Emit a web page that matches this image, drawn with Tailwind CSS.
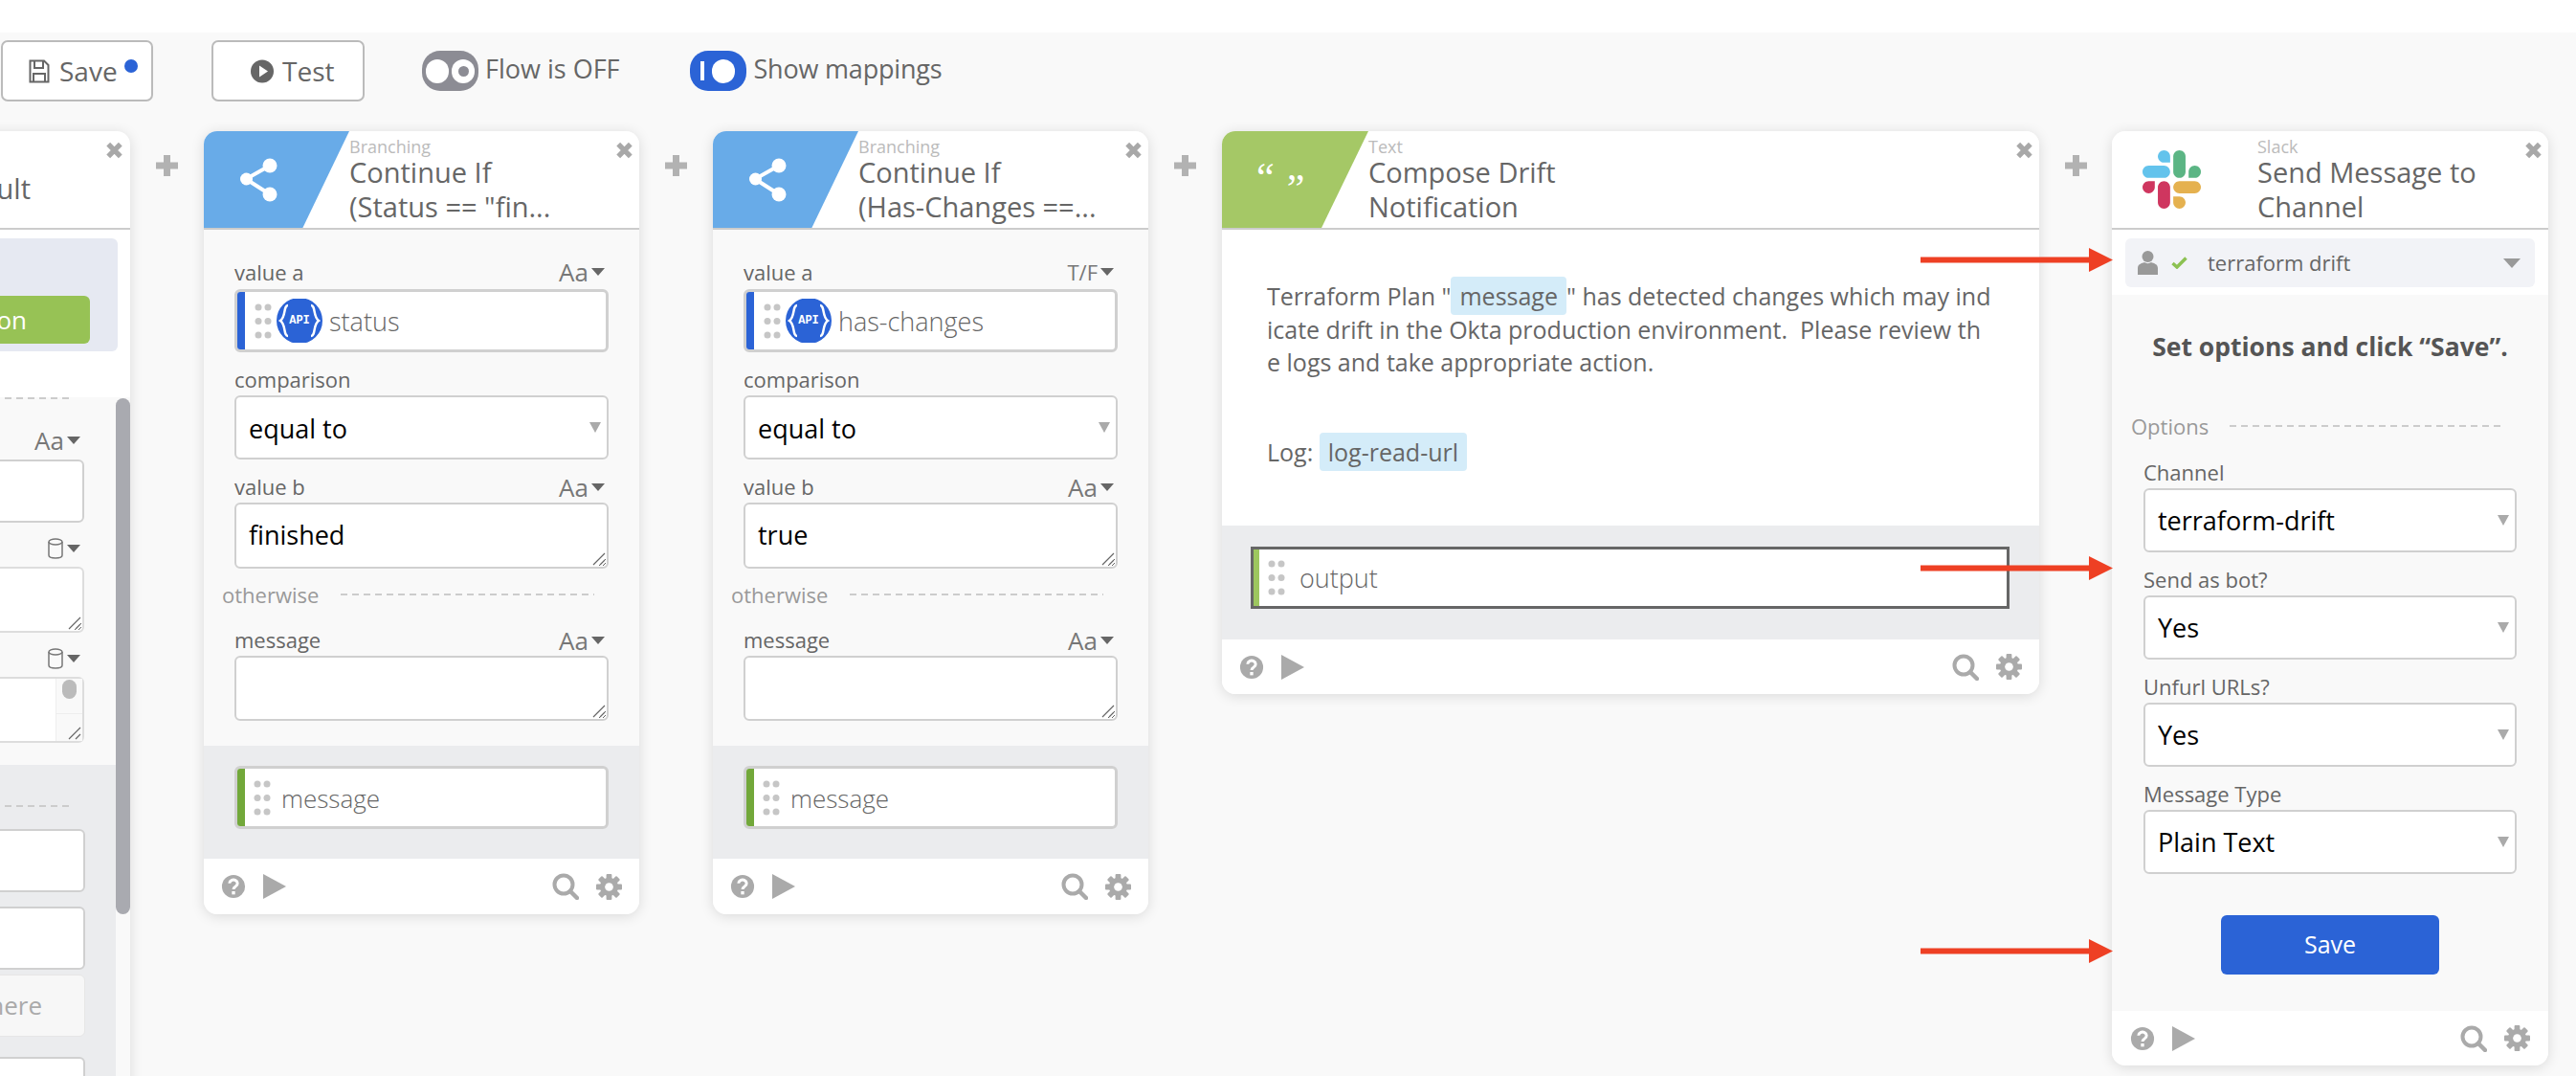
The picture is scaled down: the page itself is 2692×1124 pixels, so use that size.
<!DOCTYPE html>
<html lang="en">
<head>
    <meta charset="UTF-8">
    <title>Flow editor</title>
    <script src="https://cdn.jsdelivr.net/npm/@tailwindcss/browser@4"></script>
</head>
<body class="relative h-[1124px] overflow-hidden bg-[#f9f9f9] font-['Open_Sans',sans-serif] text-[#666]">
    <!-- shared icons -->
    <svg class="hidden">
        <symbol id="i-help" viewBox="0 0 28 28"><circle cx="14" cy="14" r="13" fill="#aaa"/><path d="M9.5 10.5a4.5 4 0 1 1 6.8 3.5c-1.6 1-2.3 1.5-2.3 3.2" fill="none" stroke="#fff" stroke-width="3.2"/><rect x="12.2" y="19.4" width="3.6" height="3.6" fill="#fff"/></symbol>
        <symbol id="i-play" viewBox="0 0 24 26"><path d="M0 0 24 13 0 26z" fill="#aaa"/></symbol>
        <symbol id="i-search" viewBox="0 0 28 28"><circle cx="12" cy="12" r="9.5" fill="none" stroke="#aaa" stroke-width="4"/><path d="M19 19 26 26" stroke="#aaa" stroke-width="4.5" stroke-linecap="round"/></symbol>
        <symbol id="i-gear" viewBox="0 0 28 28"><g fill="#aaa"><rect x="11" y="0" width="6" height="28" rx="1"/><rect x="11" y="0" width="6" height="28" rx="1" transform="rotate(45 14 14)"/><rect x="11" y="0" width="6" height="28" rx="1" transform="rotate(90 14 14)"/><rect x="11" y="0" width="6" height="28" rx="1" transform="rotate(135 14 14)"/><circle cx="14" cy="14" r="10"/></g><circle cx="14" cy="14" r="4.5" fill="#fff"/></symbol>
        <symbol id="i-x" viewBox="0 0 20 20"><path d="M3 3 17 17M17 3 3 17" stroke="#a8a8a8" stroke-width="6"/></symbol>
        <symbol id="i-plus" viewBox="0 0 23 22"><path d="M8 0h7v7.500h8v7h-8v7.500h-7v-7.500h-8v-7h8z" fill="#b2b2b2"/></symbol>
        <symbol id="i-share" viewBox="0 0 40 46"><path d="M31 8 6 22 31 38" fill="none" stroke="#fff" stroke-width="4"/><circle cx="31" cy="8" r="7.500" fill="#fff"/><circle cx="6.500" cy="22" r="6.500" fill="#fff"/><circle cx="31" cy="38" r="7.500" fill="#fff"/></symbol>
        <symbol id="i-api" viewBox="0 0 48 46"><circle cx="24" cy="23" r="24" fill="#2b63d6"/><path d="M12 7C7 7 10 19 4 23 10 27 7 39 12 39M36 7C41 7 38 19 44 23 38 27 41 39 36 39" fill="none" stroke="#fff" stroke-width="2.500"/></symbol>
        <symbol id="i-dots" viewBox="0 0 18 37"><g fill="#c6c6c6"><circle cx="4" cy="4" r="3.500"/><circle cx="14" cy="4" r="3.500"/><circle cx="4" cy="18.500" r="3.500"/><circle cx="14" cy="18.500" r="3.500"/><circle cx="4" cy="33" r="3.500"/><circle cx="14" cy="33" r="3.500"/></g></symbol>
        <symbol id="i-db" viewBox="0 0 16 22"><ellipse cx="8" cy="4" rx="7" ry="3" fill="none" stroke="#777" stroke-width="1.500"/><path d="M1 4v14c0 4 14 4 14 0V4" fill="none" stroke="#777" stroke-width="1.500"/></symbol>
        <symbol id="i-arrow" viewBox="0 0 201 25"><path d="M0 9.500H176V0L201 12.500 176 25V15.500H0z" fill="#ee4024"/></symbol>
        <symbol id="i-grip" viewBox="0 0 14 14"><path d="M1 13 13 1M8 13 13 8" stroke="#666" stroke-width="1.200"/></symbol>
    </svg>

    <div class="h-[34px] bg-white"></div>

    <!-- toolbar -->
    <div class="flex items-center pl-[1px] mt-[8px] h-[64px] text-[27px]">
        <button class="relative flex items-center h-[64px] w-[159px] pl-[27px] gap-[10px] bg-white border-2 border-[#bbb] rounded-[7px] text-[28px]">
            <svg class="w-[22px] h-[25px]" viewBox="0 0 22 25"><path d="M1.500 1.500H16L20.500 6V23.500H1.500z" fill="none" stroke="#666" stroke-width="2"/><path d="M6 2V9H15V2M5 23V15H17V23" fill="none" stroke="#666" stroke-width="2"/></svg>
            <span>Save</span>
            <span class="absolute left-[127px] top-[18px] w-[14px] h-[14px] rounded-full bg-[#2b63d6]"></span>
        </button>
        <button class="flex items-center h-[64px] w-[160px] ml-[61px] pl-[39px] gap-[9px] bg-white border-2 border-[#bbb] rounded-[7px] text-[28px]">
            <svg class="w-[24px] h-[25px]" viewBox="0 0 24 25"><circle cx="12" cy="12.500" r="12" fill="#666"/><path d="M9 6.500 18 12.500 9 18.500z" fill="#fff"/></svg>
            <span>Test</span>
        </button>
        <div class="flex items-center justify-center gap-[3px] ml-[60px] w-[59px] h-[42px] rounded-[19px] bg-[#8c8c94]">
            <span class="w-[24px] h-[25px] rounded-full bg-white"></span>
            <span class="flex items-center justify-center w-[24px] h-[25px] rounded-full bg-white"><span class="w-[11px] h-[11px] rounded-full bg-[#8c8c94]"></span></span>
        </div>
        <span class="ml-[7px] mb-[4px]">Flow is OFF</span>
        <div class="flex items-center justify-center gap-[8px] ml-[73px] w-[59px] h-[42px] rounded-[19px] bg-[#2b63d6]">
            <span class="w-[4px] h-[20px] bg-white"></span>
            <span class="w-[24px] h-[25px] rounded-full bg-white"></span>
        </div>
        <span class="ml-[8px] mb-[4px] tracking-[-0.2px]">Show mappings</span>
    </div>

    <!-- flow canvas -->
    <div class="flex items-start mt-[31px] ml-[-319px] w-[3100px]">

        <!-- card 1, runs off the left edge and the bottom -->
        <section class="relative w-[455px] h-[1000px] shrink-0 bg-white rounded-t-[14px] shadow-[0_2px_14px_rgba(0,0,0,0.13)]">
            <svg class="absolute right-[7px] top-[11px] w-[19px] h-[18px]"><use href="#i-x"/></svg>
            <div class="h-[103px] border-b-2 border-[#ccc] flex items-center justify-end pr-[104px] pt-[18px] text-[29px]">Get Result</div>
            <div class="h-[133px] pt-[9px] pr-[13px]">
                <div class="h-[118px] bg-[#e6e9f2] rounded-[6px] pt-[60px] pr-[29px]">
                    <div class="h-[50px] bg-[#97c255] rounded-[6px] flex items-center justify-end pr-[66px] text-white text-[26px]">Connection</div>
                </div>
            </div>
            <div class="relative h-[764px] bg-[#f9f9f9]">
                <div class="absolute right-0 top-[1px] w-[15px] h-[539px] rounded-full bg-[#a9aab0]"></div>
                <div class="pr-[48px]">
                    <div class="h-[2px] mt-[42px] mr-[15px] bg-[repeating-linear-gradient(90deg,#ccc_0_7px,transparent_7px_12px)]"></div>
                    <div class="flex justify-end items-center gap-[3px] h-[34px] mt-[26px] mb-[3px] text-[26px] text-[#777] pr-[4px]">Aa<span class="w-0 h-0 border-x-[7px] border-x-transparent border-t-[8px] border-t-[#666]"></span></div>
                    <div class="h-[66px] bg-white border-2 border-[#d0d0d0] rounded-[6px]"></div>
                    <div class="flex justify-end items-center gap-[4px] h-[32px] mt-[11px] mb-[3px] pr-[4px]"><svg class="w-[16px] h-[22px]"><use href="#i-db"/></svg><span class="w-0 h-0 border-x-[7px] border-x-transparent border-t-[8px] border-t-[#666]"></span></div>
                    <div class="relative h-[69px]">
                        <textarea class="block w-full h-[69px] bg-white border-2 border-[#ddd] rounded-[6px]"></textarea>
                        <svg class="absolute right-[3px] bottom-[3px] w-[14px] h-[14px]"><use href="#i-grip"/></svg>
                    </div>
                    <div class="flex justify-end items-center gap-[4px] h-[32px] mt-[11px] mb-[3px] pr-[4px]"><svg class="w-[16px] h-[22px]"><use href="#i-db"/></svg><span class="w-0 h-0 border-x-[7px] border-x-transparent border-t-[8px] border-t-[#666]"></span></div>
                    <div class="relative h-[69px]">
                        <textarea class="block w-full h-[69px] bg-white border-2 border-[#ddd] rounded-[6px]"></textarea>
                        <div class="absolute right-[2px] top-[2px] bottom-[2px] w-[28px] bg-[#f9f9f9] border-l border-[#eee]">
                            <div class="mx-auto mt-[1px] w-[15px] h-[20px] rounded-full bg-[#bbb]"></div>
                            <div class="mt-[15px] border-t border-[#eee]"></div>
                        </div>
                        <svg class="absolute right-[3px] bottom-[3px] w-[14px] h-[14px]"><use href="#i-grip"/></svg>
                    </div>
                </div>
                <div class="mt-[23px] mr-[15px] h-[340px] bg-[#ebecee] pr-[32px]">
                    <div class="h-[2px] translate-y-[42px] mr-[16px] bg-[repeating-linear-gradient(90deg,#ccc_0_7px,transparent_7px_12px)]"></div>
                    <div class="pt-[65px]">
                        <div class="h-[66px] bg-white border-2 border-[#d0d0d0] rounded-[6px]"></div>
                        <div class="h-[66px] mt-[15px] bg-white border-2 border-[#d0d0d0] rounded-[6px]"></div>
                        <div class="h-[65px] mt-[5px] flex items-center justify-end pr-[44px] bg-[#f7f7f7] rounded-[6px] border border-[#e6e6e6] text-[26px] text-[#aaa]">Drop here</div>
                        <div class="h-[66px] mt-[21px] bg-white border-2 border-[#d0d0d0] rounded-[6px]"></div>
                    </div>
                </div>
            </div>
        </section>

        <div class="w-[77px] shrink-0 flex justify-center pt-[25px]"><svg class="w-[23px] h-[22px]"><use href="#i-plus"/></svg></div>

        <!-- continue if: status -->
        <section class="relative w-[455px] shrink-0 bg-[#f9f9f9] rounded-[14px] shadow-[0_2px_14px_rgba(0,0,0,0.13)]">
            <svg class="absolute right-[6px] top-[11px] w-[19px] h-[18px]"><use href="#i-x"/></svg>
            <header class="flex h-[103px] bg-white rounded-t-[14px] border-b-2 border-[#ccc] overflow-hidden">
                <div class="w-[152px] shrink-0 flex items-center pl-[38px] bg-[#68abe8] [clip-path:polygon(0_0,100%_0,68%_100%,0_100%)]"><svg class="w-[40px] h-[46px]"><use href="#i-share"/></svg></div>
                <div class="pt-[7px]">
                    <div class="text-[18px] leading-[18px] text-[#bbb]">Branching</div>
                    <div class="text-[29px] leading-[36px]">Continue If<br>(Status == "fin...</div>
                </div>
            </header>
            <div class="h-[539px] px-[32px] pt-[29px]">
                <div class="flex justify-between items-center h-[33px] pb-[3px] text-[22px]"><span>value a</span><span class="flex items-center gap-[3px] pr-[4px] text-[26px] leading-[28px] text-[#777]">Aa<span class="w-0 h-0 border-x-[7px] border-x-transparent border-t-[8px] border-t-[#666]"></span></span></div>
                <div class="relative flex items-center h-[66px] bg-white border-[3px] border-[#d0d0d0] rounded-[6px] overflow-hidden">
                    <span class="w-[8px] h-full bg-[#2b63d6]"></span>
                    <svg class="ml-[10px] w-[18px] h-[37px]"><use href="#i-dots"/></svg>
                    <span class="relative ml-[5px] w-[48px] h-[46px]"><svg class="w-[48px] h-[46px]"><use href="#i-api"/></svg><span class="absolute inset-0 flex items-center justify-center font-['Liberation_Mono',monospace] font-bold text-[12px] text-white">API</span></span>
                    <span class="ml-[7px] pt-[2px] text-[27px] font-light">status</span>
                </div>
                <div class="h-[31px] mt-[14px] text-[22px] leading-[28px]">comparison</div>
                <div class="relative">
                    <select class="block w-full h-[67px] pl-[13px] pt-[3px] appearance-none bg-white border-2 border-[#d0d0d0] rounded-[6px] text-[27px] text-black"><option>equal to</option></select>
                    <span class="absolute right-[8px] top-[28px] w-0 h-0 border-x-[6px] border-x-transparent border-t-[11px] border-t-[#aaa]"></span>
                </div>
                <div class="flex justify-between items-center h-[31px] pb-[2px] mt-[14px] text-[22px]"><span>value b</span><span class="flex items-center gap-[3px] pr-[4px] text-[26px] leading-[28px] text-[#777]">Aa<span class="w-0 h-0 border-x-[7px] border-x-transparent border-t-[8px] border-t-[#666]"></span></span></div>
                <div class="relative h-[69px]">
                    <textarea class="block w-full h-[69px] pl-[13px] pt-[14px] bg-white border-2 border-[#d0d0d0] rounded-[6px] text-[27px] leading-[36px] text-black">finished</textarea>
                    <svg class="absolute right-[3px] bottom-[3px] w-[14px] h-[14px]"><use href="#i-grip"/></svg>
                </div>
                <div class="flex items-center h-[24px] mt-[15px] -ml-[13px] text-[22px] text-[#999]"><span class="w-[124px] shrink-0">otherwise</span><span class="w-[265px] h-[2px] bg-[repeating-linear-gradient(90deg,#ccc_0_7px,transparent_7px_12px)]"></span></div>
                <div class="flex justify-between items-center h-[31px] pb-[2px] mt-[21px] text-[22px]"><span>message</span><span class="flex items-center gap-[3px] pr-[4px] text-[26px] leading-[28px] text-[#777]">Aa<span class="w-0 h-0 border-x-[7px] border-x-transparent border-t-[8px] border-t-[#666]"></span></span></div>
                <div class="relative h-[68px]">
                    <textarea class="block w-full h-[68px] bg-white border-2 border-[#d0d0d0] rounded-[6px]"></textarea>
                    <svg class="absolute right-[3px] bottom-[3px] w-[14px] h-[14px]"><use href="#i-grip"/></svg>
                </div>
            </div>
            <div class="h-[118px] pt-[21px] px-[32px] bg-[#ebecee]">
                <div class="flex items-center h-[66px] bg-white border-[3px] border-[#d0d0d0] rounded-[6px] overflow-hidden">
                    <span class="w-[8px] h-full bg-[#72a83a]"></span>
                    <svg class="ml-[9px] w-[18px] h-[37px]"><use href="#i-dots"/></svg>
                    <span class="ml-[11px] pt-[2px] text-[26px] font-light">message</span>
                </div>
            </div>
            <footer class="flex items-center h-[58px] px-[18px] bg-white rounded-b-[14px]">
                <svg class="w-[26px] h-[26px]"><use href="#i-help"/></svg>
                <svg class="ml-[18px] w-[24px] h-[26px]"><use href="#i-play"/></svg>
                <svg class="ml-auto w-[28px] h-[28px]"><use href="#i-search"/></svg>
                <svg class="ml-[18px] w-[27px] h-[27px]"><use href="#i-gear"/></svg>
            </footer>
        </section>

        <div class="w-[77px] shrink-0 flex justify-center pt-[25px]"><svg class="w-[23px] h-[22px]"><use href="#i-plus"/></svg></div>

        <!-- continue if: has-changes -->
        <section class="relative w-[455px] shrink-0 bg-[#f9f9f9] rounded-[14px] shadow-[0_2px_14px_rgba(0,0,0,0.13)]">
            <svg class="absolute right-[6px] top-[11px] w-[19px] h-[18px]"><use href="#i-x"/></svg>
            <header class="flex h-[103px] bg-white rounded-t-[14px] border-b-2 border-[#ccc] overflow-hidden">
                <div class="w-[152px] shrink-0 flex items-center pl-[38px] bg-[#68abe8] [clip-path:polygon(0_0,100%_0,68%_100%,0_100%)]"><svg class="w-[40px] h-[46px]"><use href="#i-share"/></svg></div>
                <div class="pt-[7px]">
                    <div class="text-[18px] leading-[18px] text-[#bbb]">Branching</div>
                    <div class="text-[29px] leading-[36px] whitespace-nowrap">Continue If<br>(Has-Changes ==...</div>
                </div>
            </header>
            <div class="h-[539px] px-[32px] pt-[29px]">
                <div class="flex justify-between items-center h-[33px] pb-[3px] text-[22px]"><span>value a</span><span class="flex items-center gap-[3px] pr-[4px] text-[22px] leading-[28px] text-[#777]">T/F<span class="w-0 h-0 border-x-[7px] border-x-transparent border-t-[8px] border-t-[#666]"></span></span></div>
                <div class="relative flex items-center h-[66px] bg-white border-[3px] border-[#d0d0d0] rounded-[6px] overflow-hidden">
                    <span class="w-[8px] h-full bg-[#2b63d6]"></span>
                    <svg class="ml-[10px] w-[18px] h-[37px]"><use href="#i-dots"/></svg>
                    <span class="relative ml-[5px] w-[48px] h-[46px]"><svg class="w-[48px] h-[46px]"><use href="#i-api"/></svg><span class="absolute inset-0 flex items-center justify-center font-['Liberation_Mono',monospace] font-bold text-[12px] text-white">API</span></span>
                    <span class="ml-[7px] pt-[2px] text-[27px] font-light">has-changes</span>
                </div>
                <div class="h-[31px] mt-[14px] text-[22px] leading-[28px]">comparison</div>
                <div class="relative">
                    <select class="block w-full h-[67px] pl-[13px] pt-[3px] appearance-none bg-white border-2 border-[#d0d0d0] rounded-[6px] text-[27px] text-black"><option>equal to</option></select>
                    <span class="absolute right-[8px] top-[28px] w-0 h-0 border-x-[6px] border-x-transparent border-t-[11px] border-t-[#aaa]"></span>
                </div>
                <div class="flex justify-between items-center h-[31px] pb-[2px] mt-[14px] text-[22px]"><span>value b</span><span class="flex items-center gap-[3px] pr-[4px] text-[26px] leading-[28px] text-[#777]">Aa<span class="w-0 h-0 border-x-[7px] border-x-transparent border-t-[8px] border-t-[#666]"></span></span></div>
                <div class="relative h-[69px]">
                    <textarea class="block w-full h-[69px] pl-[13px] pt-[14px] bg-white border-2 border-[#d0d0d0] rounded-[6px] text-[27px] leading-[36px] text-black">true</textarea>
                    <svg class="absolute right-[3px] bottom-[3px] w-[14px] h-[14px]"><use href="#i-grip"/></svg>
                </div>
                <div class="flex items-center h-[24px] mt-[15px] -ml-[13px] text-[22px] text-[#999]"><span class="w-[124px] shrink-0">otherwise</span><span class="w-[265px] h-[2px] bg-[repeating-linear-gradient(90deg,#ccc_0_7px,transparent_7px_12px)]"></span></div>
                <div class="flex justify-between items-center h-[31px] pb-[2px] mt-[21px] text-[22px]"><span>message</span><span class="flex items-center gap-[3px] pr-[4px] text-[26px] leading-[28px] text-[#777]">Aa<span class="w-0 h-0 border-x-[7px] border-x-transparent border-t-[8px] border-t-[#666]"></span></span></div>
                <div class="relative h-[68px]">
                    <textarea class="block w-full h-[68px] bg-white border-2 border-[#d0d0d0] rounded-[6px]"></textarea>
                    <svg class="absolute right-[3px] bottom-[3px] w-[14px] h-[14px]"><use href="#i-grip"/></svg>
                </div>
            </div>
            <div class="h-[118px] pt-[21px] px-[32px] bg-[#ebecee]">
                <div class="flex items-center h-[66px] bg-white border-[3px] border-[#d0d0d0] rounded-[6px] overflow-hidden">
                    <span class="w-[8px] h-full bg-[#72a83a]"></span>
                    <svg class="ml-[9px] w-[18px] h-[37px]"><use href="#i-dots"/></svg>
                    <span class="ml-[11px] pt-[2px] text-[26px] font-light">message</span>
                </div>
            </div>
            <footer class="flex items-center h-[58px] px-[18px] bg-white rounded-b-[14px]">
                <svg class="w-[26px] h-[26px]"><use href="#i-help"/></svg>
                <svg class="ml-[18px] w-[24px] h-[26px]"><use href="#i-play"/></svg>
                <svg class="ml-auto w-[28px] h-[28px]"><use href="#i-search"/></svg>
                <svg class="ml-[18px] w-[27px] h-[27px]"><use href="#i-gear"/></svg>
            </footer>
        </section>

        <div class="w-[77px] shrink-0 flex justify-center pt-[25px]"><svg class="w-[23px] h-[22px]"><use href="#i-plus"/></svg></div>

        <!-- compose text -->
        <section class="relative w-[854px] shrink-0 bg-white rounded-[14px] shadow-[0_2px_14px_rgba(0,0,0,0.13)]">
            <svg class="absolute right-[6px] top-[11px] w-[19px] h-[18px]"><use href="#i-x"/></svg>
            <header class="flex h-[103px] bg-white rounded-t-[14px] border-b-2 border-[#ccc] overflow-hidden">
                <div class="w-[153px] shrink-0 flex items-center gap-[13px] pl-[36px] bg-[#a5c866] [clip-path:polygon(0_0,100%_0,68%_100%,0_100%)] font-['Liberation_Serif',serif] text-[42px] leading-none text-white"><span class="-translate-y-[3px]">“</span><span class="translate-y-[9px]">”</span></div>
                <div class="pt-[7px]">
                    <div class="text-[18px] leading-[18px] text-[#bbb]">Text</div>
                    <div class="text-[29px] leading-[36px]">Compose Drift<br>Notification</div>
                </div>
            </header>
            <div class="h-[309px] pl-[47px] pt-[52px] text-[25px] leading-[34.5px]">
                <div class="whitespace-pre">Terraform Plan "<span class="px-[9px] py-[3px] rounded-[4px] bg-[#d4ecf9]">message</span>" has detected changes which may ind</div>
                <div class="whitespace-pre">icate drift in the Okta production environment.  Please review th</div>
                <div class="whitespace-pre">e logs and take appropriate action.</div>
                <div class="whitespace-pre mt-[59px]">Log: <span class="px-[9px] py-[3px] rounded-[4px] bg-[#d4ecf9]">log-read-url</span></div>
            </div>
            <div class="h-[119px] pt-[22px] pl-[30px] bg-[#ebecee]">
                <div class="flex items-center w-[793px] h-[65px] bg-white border-[3px] border-[#666]">
                    <span class="w-[6px] h-full bg-[#9dc75f]"></span>
                    <svg class="ml-[9px] w-[18px] h-[37px]"><use href="#i-dots"/></svg>
                    <span class="ml-[15px] pt-[2px] text-[27px] font-light">output</span>
                </div>
            </div>
            <footer class="flex items-center h-[57px] px-[18px] bg-white rounded-b-[14px]">
                <svg class="w-[26px] h-[26px]"><use href="#i-help"/></svg>
                <svg class="ml-[18px] w-[24px] h-[26px]"><use href="#i-play"/></svg>
                <svg class="ml-auto w-[28px] h-[28px]"><use href="#i-search"/></svg>
                <svg class="ml-[18px] w-[27px] h-[27px]"><use href="#i-gear"/></svg>
            </footer>
        </section>

        <div class="w-[76px] shrink-0 flex justify-center pt-[25px]"><svg class="w-[23px] h-[22px]"><use href="#i-plus"/></svg></div>

        <!-- slack -->
        <section class="relative w-[456px] shrink-0 bg-[#f9f9f9] rounded-[14px] shadow-[0_2px_14px_rgba(0,0,0,0.13)]">
            <svg class="absolute right-[6px] top-[11px] w-[19px] h-[18px]"><use href="#i-x"/></svg>
            <header class="flex h-[103px] bg-white rounded-t-[14px] border-b-2 border-[#ccc]">
                <div class="w-[152px] shrink-0 pl-[32px] pt-[19px]">
                    <svg class="w-[61px] h-[63px]" viewBox="0 0 122.800 122.800">
                        <path d="M25.800 77.600c0 7.100-5.800 12.900-12.900 12.900S0 84.700 0 77.600s5.800-12.900 12.900-12.900h12.900v12.900z" fill="#cf365f"/>
                        <path d="M32.300 77.600c0-7.100 5.800-12.900 12.900-12.900s12.900 5.800 12.900 12.900v32.300c0 7.100-5.800 12.900-12.900 12.900s-12.900-5.800-12.900-12.900V77.600z" fill="#cf365f"/>
                        <path d="M45.200 25.800c-7.100 0-12.900-5.800-12.900-12.900S38.100 0 45.200 0s12.900 5.800 12.900 12.900v12.900H45.200z" fill="#63c3ec"/>
                        <path d="M45.200 32.300c7.100 0 12.900 5.800 12.900 12.900s-5.800 12.900-12.900 12.900H12.900C5.800 58.100 0 52.300 0 45.200s5.800-12.900 12.900-12.900h32.300z" fill="#63c3ec"/>
                        <path d="M97 45.200c0-7.100 5.800-12.900 12.900-12.900s12.900 5.800 12.900 12.900-5.800 12.900-12.900 12.900H97V45.200z" fill="#5bb584"/>
                        <path d="M90.500 45.200c0 7.100-5.800 12.900-12.900 12.900s-12.900-5.800-12.900-12.900V12.900C64.700 5.800 70.500 0 77.600 0s12.900 5.800 12.900 12.900v32.300z" fill="#5bb584"/>
                        <path d="M77.600 97c7.100 0 12.900 5.800 12.900 12.900s-5.800 12.900-12.900 12.900-12.900-5.800-12.900-12.900V97h12.900z" fill="#e5b14f"/>
                        <path d="M77.600 90.500c-7.100 0-12.900-5.800-12.900-12.900s5.800-12.900 12.900-12.900h32.300c7.100 0 12.900 5.800 12.900 12.900s-5.800 12.900-12.900 12.900H77.600z" fill="#e5b14f"/>
                    </svg>
                </div>
                <div class="pt-[7px]">
                    <div class="text-[18px] leading-[18px] text-[#bbb]">Slack</div>
                    <div class="text-[29px] leading-[36px]">Send Message to<br>Channel</div>
                </div>
            </header>
            <div class="h-[68px] bg-white px-[14px] pt-[9px]">
                <div class="flex items-center h-[51px] pl-[13px] bg-[#f2f3f7] rounded-[6px] text-[22px]">
                    <svg class="w-[21px] h-[25px]" viewBox="0 0 21 25"><circle cx="10.500" cy="6" r="6" fill="#999"/><path d="M0 25V18C0 14 4 13 7 12 9 13.500 12 13.500 14 12 17 13 21 14 21 18V25z" fill="#999"/></svg>
                    <svg class="ml-[14px] w-[17px] h-[13px]" viewBox="0 0 17 13"><path d="M1.500 7 6 11 15.500 1.500" fill="none" stroke="#8cc152" stroke-width="3.500"/></svg>
                    <span class="ml-[21px]">terraform drift</span>
                    <span class="ml-auto mr-[15px] w-0 h-0 border-x-[9px] border-x-transparent border-t-[10px] border-t-[#999]"></span>
                </div>
            </div>
            <div class="h-[748px] pt-[37px]">
                <div class="h-[34px] text-center whitespace-nowrap text-[26.5px] leading-[34px] font-bold text-[#555]">Set options and click “Save”.</div>
                <div class="flex items-center h-[24px] mt-[54px] pl-[20px] text-[22px] text-[#999]"><span class="w-[103px] shrink-0">Options</span><span class="w-[284px] h-[2px] bg-[repeating-linear-gradient(90deg,#ccc_0_7px,transparent_7px_12px)]"></span></div>
                <div class="px-[33px] mt-[22px]">
                    <div class="h-[31px] text-[22px] leading-[28px]">Channel</div>
                    <div class="relative">
                        <select class="block w-full h-[67px] pl-[13px] pt-[2px] appearance-none bg-white border-2 border-[#d0d0d0] rounded-[6px] text-[27px] text-black"><option>terraform-drift</option></select>
                        <span class="absolute right-[8px] top-[28px] w-0 h-0 border-x-[6px] border-x-transparent border-t-[11px] border-t-[#aaa]"></span>
                    </div>
                    <div class="h-[31px] mt-[14px] text-[22px] leading-[28px]">Send as bot?</div>
                    <div class="relative">
                        <select class="block w-full h-[67px] pl-[13px] pt-[2px] appearance-none bg-white border-2 border-[#d0d0d0] rounded-[6px] text-[27px] text-black"><option>Yes</option></select>
                        <span class="absolute right-[8px] top-[28px] w-0 h-0 border-x-[6px] border-x-transparent border-t-[11px] border-t-[#aaa]"></span>
                    </div>
                    <div class="h-[31px] mt-[14px] text-[22px] leading-[28px]">Unfurl URLs?</div>
                    <div class="relative">
                        <select class="block w-full h-[67px] pl-[13px] pt-[2px] appearance-none bg-white border-2 border-[#d0d0d0] rounded-[6px] text-[27px] text-black"><option>Yes</option></select>
                        <span class="absolute right-[8px] top-[28px] w-0 h-0 border-x-[6px] border-x-transparent border-t-[11px] border-t-[#aaa]"></span>
                    </div>
                    <div class="h-[31px] mt-[14px] text-[22px] leading-[28px]">Message Type</div>
                    <div class="relative">
                        <select class="block w-full h-[67px] pl-[13px] pt-[2px] appearance-none bg-white border-2 border-[#d0d0d0] rounded-[6px] text-[27px] text-black"><option>Plain Text</option></select>
                        <span class="absolute right-[8px] top-[28px] w-0 h-0 border-x-[6px] border-x-transparent border-t-[11px] border-t-[#aaa]"></span>
                    </div>
                    <button class="block w-[228px] h-[62px] mx-auto mt-[43px] bg-[#2b63d6] rounded-[6px] text-[25px] text-white">Save</button>
                </div>
            </div>
            <footer class="flex items-center h-[57px] px-[19px] bg-white rounded-b-[14px]">
                <svg class="w-[26px] h-[26px]"><use href="#i-help"/></svg>
                <svg class="ml-[18px] w-[24px] h-[26px]"><use href="#i-play"/></svg>
                <svg class="ml-auto w-[28px] h-[28px]"><use href="#i-search"/></svg>
                <svg class="ml-[18px] w-[27px] h-[27px]"><use href="#i-gear"/></svg>
            </footer>
        </section>
    </div>

    <!-- annotation arrows lying over the cards -->
    <svg class="absolute left-[2007px] top-[259px] w-[201px] h-[25px]"><use href="#i-arrow"/></svg>
    <svg class="absolute left-[2007px] top-[581px] w-[201px] h-[25px]"><use href="#i-arrow"/></svg>
    <svg class="absolute left-[2007px] top-[981px] w-[201px] h-[25px]"><use href="#i-arrow"/></svg>
</body>
</html>
